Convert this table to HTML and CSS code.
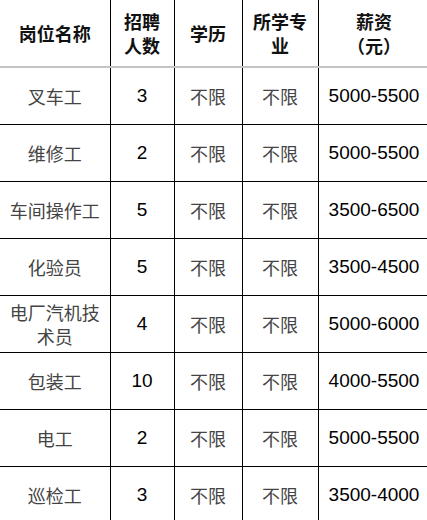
FILE: index.html
```html
<!DOCTYPE html>
<html lang="zh">
<head>
<meta charset="utf-8">
<link rel="stylesheet" href="styles.css">
</head>
<body>
<table class="jobs">
  <colgroup>
    <col class="c1"><col class="c2"><col class="c3"><col class="c4"><col class="c5">
  </colgroup>
  <thead>
    <tr>
      <th>岗位名称</th>
      <th>招聘<br>人数</th>
      <th>学历</th>
      <th>所学专<br>业</th>
      <th>薪资<br>（元）</th>
    </tr>
  </thead>
  <tbody>
    <tr><td class="cn">叉车工</td><td class="num">3</td><td class="cn">不限</td><td class="cn">不限</td><td class="num">5000-5500</td></tr>
    <tr><td class="cn">维修工</td><td class="num">2</td><td class="cn">不限</td><td class="cn">不限</td><td class="num">5000-5500</td></tr>
    <tr><td class="cn">车间操作工</td><td class="num">5</td><td class="cn">不限</td><td class="cn">不限</td><td class="num">3500-6500</td></tr>
    <tr><td class="cn">化验员</td><td class="num">5</td><td class="cn">不限</td><td class="cn">不限</td><td class="num">3500-4500</td></tr>
    <tr><td class="cn two">电厂汽机技<br>术员</td><td class="num">4</td><td class="cn">不限</td><td class="cn">不限</td><td class="num">5000-6000</td></tr>
    <tr><td class="cn">包装工</td><td class="num">10</td><td class="cn">不限</td><td class="cn">不限</td><td class="num">4000-5500</td></tr>
    <tr><td class="cn">电工</td><td class="num">2</td><td class="cn">不限</td><td class="cn">不限</td><td class="num">5000-5500</td></tr>
    <tr><td class="cn">巡检工</td><td class="num">3</td><td class="cn">不限</td><td class="cn">不限</td><td class="num">3500-4000</td></tr>
  </tbody>
</table>
</body>
</html>
```
FILE: styles.css
```css
html, body {
  margin: 0;
  padding: 0;
  background: #ffffff;
}
body {
  width: 427px;
  overflow: hidden;
}
.jobs {
  border-collapse: collapse;
  table-layout: fixed;
  width: 430px;
}
.c1 { width: 110px; }
.c2 { width: 64px; }
.c3 { width: 68px; }
.c4 { width: 76px; }
.c5 { width: 112px; }
.jobs th,
.jobs td {
  padding: 0;
  text-align: center;
  vertical-align: middle;
  border-right: 1px solid #000;
  border-bottom: 1px solid #000;
}
.jobs th {
  height: 66px;
  font-family: "Noto Sans CJK SC", sans-serif;
  font-weight: 700;
  font-size: 18px;
  line-height: 24px;
  color: #111;
  border-bottom: 2px solid #c4c4c4;
}
.jobs td {
  height: 56px;
}
.cn {
  font-family: "Noto Sans CJK SC", sans-serif;
  font-weight: 400;
  font-size: 18px;
  line-height: 24px;
  color: #444;
}
.num {
  font-family: "Liberation Sans", Arial, sans-serif;
  font-size: 19px;
  color: #000;
}
```
